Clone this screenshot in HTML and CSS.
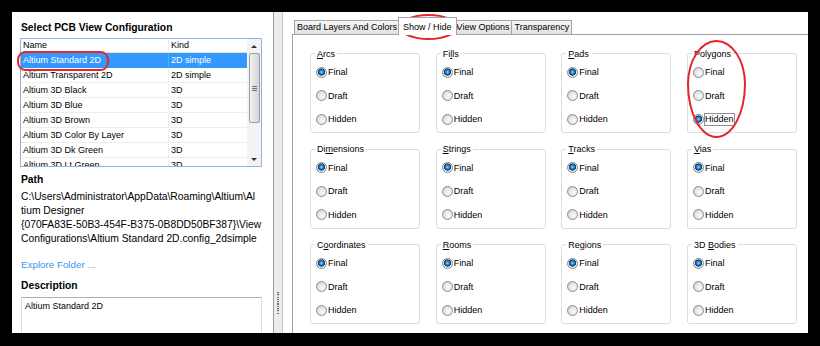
FILE: index.html
```html
<!DOCTYPE html>
<html lang="en">
<head>
<meta charset="utf-8">
<title>PCB View Configuration</title>
<link rel="stylesheet" href="styles.css">
</head>
<body>
<div class="window">
  <section class="left">
    <h2 class="h">Select PCB View Configuration</h2>
    <div class="list">
      <div class="list-body">
        <div class="row head"><span class="c1">Name</span><span class="c2">Kind</span></div>
        <div class="row sel"><span class="c1">Altium Standard 2D</span><span class="c2">2D simple</span></div>
        <div class="row"><span class="c1">Altium Transparent 2D</span><span class="c2">2D simple</span></div>
        <div class="row"><span class="c1">Altium 3D Black</span><span class="c2">3D</span></div>
        <div class="row"><span class="c1">Altium 3D Blue</span><span class="c2">3D</span></div>
        <div class="row"><span class="c1">Altium 3D Brown</span><span class="c2">3D</span></div>
        <div class="row"><span class="c1">Altium 3D Color By Layer</span><span class="c2">3D</span></div>
        <div class="row"><span class="c1">Altium 3D Dk Green</span><span class="c2">3D</span></div>
        <div class="row"><span class="c1">Altium 3D Lt Green</span><span class="c2">3D</span></div>
      </div>
      <div class="vscroll">
        <div class="sbtn"><i class="tri-up"></i></div>
        <div class="thumb"><i class="grip-lines"></i></div>
        <div class="strack"></div>
        <div class="sbtn"><i class="tri-down"></i></div>
      </div>
    </div>
    <h2 class="h path-h">Path</h2>
    <p class="path">C:\Users\Administrator\AppData\Roaming\Altium\Al<br>tium Designer<br>{070FA83E-50B3-454F-B375-0B8DD50BF387}\View<br>Configurations\Altium Standard 2D.config_2dsimple</p>
    <a class="link">Explore Folder ...</a>
    <h2 class="h desc-h">Description</h2>
    <div class="desc">Altium Standard 2D</div>
  </section>

  <div class="splitter"><div class="grip"></div></div>

  <section class="right">
    <div class="tabs">
      <div class="tab">Board Layers And Colors</div>
      <div class="tab active">Show / Hide</div>
      <div class="tab">View Options</div>
      <div class="tab">Transparency</div>
    </div>
    <div class="page">
      <div class="grid">
        <fieldset class="grp"><legend><u>A</u>rcs</legend>
          <div class="opt"><i class="rb on"></i><span>Final</span></div>
          <div class="opt"><i class="rb"></i><span>Draft</span></div>
          <div class="opt"><i class="rb"></i><span>Hidden</span></div>
        </fieldset>
        <fieldset class="grp"><legend>Fi<u>l</u>ls</legend>
          <div class="opt"><i class="rb on"></i><span>Final</span></div>
          <div class="opt"><i class="rb"></i><span>Draft</span></div>
          <div class="opt"><i class="rb"></i><span>Hidden</span></div>
        </fieldset>
        <fieldset class="grp"><legend><u>P</u>ads</legend>
          <div class="opt"><i class="rb on"></i><span>Final</span></div>
          <div class="opt"><i class="rb"></i><span>Draft</span></div>
          <div class="opt"><i class="rb"></i><span>Hidden</span></div>
        </fieldset>
        <fieldset class="grp"><legend>Poly<u>g</u>ons</legend>
          <div class="opt"><i class="rb"></i><span>Final</span></div>
          <div class="opt"><i class="rb"></i><span>Draft</span></div>
          <div class="opt"><i class="rb on"></i><span class="focus">Hidden</span></div>
        </fieldset>

        <fieldset class="grp"><legend>Di<u>m</u>ensions</legend>
          <div class="opt"><i class="rb on"></i><span>Final</span></div>
          <div class="opt"><i class="rb"></i><span>Draft</span></div>
          <div class="opt"><i class="rb"></i><span>Hidden</span></div>
        </fieldset>
        <fieldset class="grp"><legend><u>S</u>trings</legend>
          <div class="opt"><i class="rb on"></i><span>Final</span></div>
          <div class="opt"><i class="rb"></i><span>Draft</span></div>
          <div class="opt"><i class="rb"></i><span>Hidden</span></div>
        </fieldset>
        <fieldset class="grp"><legend><u>T</u>racks</legend>
          <div class="opt"><i class="rb on"></i><span>Final</span></div>
          <div class="opt"><i class="rb"></i><span>Draft</span></div>
          <div class="opt"><i class="rb"></i><span>Hidden</span></div>
        </fieldset>
        <fieldset class="grp"><legend><u>V</u>ias</legend>
          <div class="opt"><i class="rb on"></i><span>Final</span></div>
          <div class="opt"><i class="rb"></i><span>Draft</span></div>
          <div class="opt"><i class="rb"></i><span>Hidden</span></div>
        </fieldset>

        <fieldset class="grp"><legend>C<u>o</u>ordinates</legend>
          <div class="opt"><i class="rb on"></i><span>Final</span></div>
          <div class="opt"><i class="rb"></i><span>Draft</span></div>
          <div class="opt"><i class="rb"></i><span>Hidden</span></div>
        </fieldset>
        <fieldset class="grp"><legend><u>R</u>ooms</legend>
          <div class="opt"><i class="rb on"></i><span>Final</span></div>
          <div class="opt"><i class="rb"></i><span>Draft</span></div>
          <div class="opt"><i class="rb"></i><span>Hidden</span></div>
        </fieldset>
        <fieldset class="grp"><legend>Re<u>g</u>ions</legend>
          <div class="opt"><i class="rb on"></i><span>Final</span></div>
          <div class="opt"><i class="rb"></i><span>Draft</span></div>
          <div class="opt"><i class="rb"></i><span>Hidden</span></div>
        </fieldset>
        <fieldset class="grp"><legend>3D <u>B</u>odies</legend>
          <div class="opt"><i class="rb on"></i><span>Final</span></div>
          <div class="opt"><i class="rb"></i><span>Draft</span></div>
          <div class="opt"><i class="rb"></i><span>Hidden</span></div>
        </fieldset>
      </div>
    </div>
  </section>

  <div class="mark mark-row"></div>
  <div class="mark mark-tab"></div>
  <div class="mark mark-poly"></div>
</div>
</body>
</html>
```

FILE: styles.css
```css
* { box-sizing: border-box; }
html, body { margin: 0; padding: 0; }
body {
  background: #000;
  width: 820px;
  height: 346px;
  overflow: hidden;
  font-family: "Liberation Sans", Arial, sans-serif;
  font-size: 9px;
  color: #000;
}

.window {
  position: relative;
  margin: 12px 0 0 12px;
  width: 796px;
  height: 321px;
  background: #fff;
  display: flex;
  overflow: hidden;
}

/* ---------- left panel ---------- */
.left {
  width: 261px;
  flex: none;
  padding: 9px 11px 0 9px;
  display: flex;
  flex-direction: column;
  overflow: hidden;
}
.h {
  margin: 0;
  font-size: 10.3px;
  font-weight: bold;
  line-height: 14px;
  white-space: nowrap;
  flex: none;
}
.list {
  margin: 3px 0 0 -1px;
  height: 129px;
  flex: none;
  border: 1px solid #93b5dd;
  display: flex;
}
.list-body { flex: 1; overflow: hidden; }
.row {
  display: flex;
  height: 15px;
  padding-top: 1px;
  line-height: 13px;
  border-bottom: 1px solid #ededed;
  white-space: nowrap;
}
.row span { overflow: hidden; }
.row .c1 { width: 148px; flex: none; padding-left: 2px; border-right: 1px solid #ededed; }
.row .c2 { flex: 1; padding-left: 2px; }
.row.head { height: 14px; padding-top: 0; border-bottom-color: #e2e2e2; }
.row.sel { background: #3399ff; color: #fff; border-bottom-color: #3399ff; }
.row.sel .c1 { border-right-color: #5aa9fb; }

.vscroll {
  width: 14px;
  flex: none;
  background: #f3f3f3;
  display: flex;
  flex-direction: column;
}
.sbtn {
  height: 14px;
  flex: none;
  display: flex;
  align-items: center;
  justify-content: center;
}
.tri-up { width: 0; height: 0; border-left: 3px solid transparent; border-right: 3px solid transparent; border-bottom: 3px solid #333; }
.tri-down { width: 0; height: 0; border-left: 3px solid transparent; border-right: 3px solid transparent; border-top: 3px solid #333; }
.thumb {
  height: 70px;
  flex: none;
  margin: 0 1px 0 2px;
  border: 1px solid #9d9d9d;
  border-radius: 2px;
  background: linear-gradient(to right, #f4f4f4, #e2e2e2 50%, #d4d4d4);
  display: flex;
  align-items: center;
  justify-content: center;
}
.grip-lines {
  width: 5px;
  height: 5px;
  background: repeating-linear-gradient(to bottom, #6f6f6f 0 1px, transparent 1px 2px);
}
.strack { flex: 1; }

.path-h { margin-top: 6px; }
.path {
  margin: 3px 0 0;
  font-size: 10.3px;
  line-height: 13.9px;
  white-space: nowrap;
  flex: none;
}
.link {
  margin-top: 12.4px;
  font-size: 9.8px;
  line-height: 14px;
  color: #3d95ea;
  flex: none;
}
.desc-h { margin-top: 7.3px; }
.desc {
  margin-top: 3.7px;
  height: 60px;
  flex: none;
  border: 1px solid #dadde3;
  border-top-color: #abadb3;
  padding: 2px 3px;
  line-height: 12px;
}

/* ---------- splitter ---------- */
.splitter {
  width: 10px;
  flex: none;
  background: #ececec;
  border-left: 1px solid #9f9f9f;
  border-right: 1px solid #c5c5c5;
  display: flex;
  flex-direction: column;
  justify-content: flex-end;
  padding-bottom: 18px;
}
.grip {
  width: 2px;
  height: 23px;
  margin-left: 3px;
  background: repeating-linear-gradient(to bottom, #5b7591 0 1px, #c9d2dc 1px 1.5px, transparent 1.5px 2.3px);
}

/* ---------- right panel ---------- */
.right {
  flex: 1;
  padding: 5px 0 0 9px;
  display: flex;
  flex-direction: column;
  min-width: 0;
}
.tabs {
  height: 18px;
  flex: none;
  display: flex;
  align-items: flex-end;
  padding-left: 2px;
  border-bottom: 1px solid #a3a3a3;
}
.tab {
  height: 14px;
  border: 1px solid #a5a5a5;
  border-bottom: none;
  margin-left: -1px;
  padding: 0 2px;
  line-height: 13px;
  white-space: nowrap;
  background: linear-gradient(#f5f5f5, #ececec 50%, #e1e1e1);
}
.tab:first-child { margin-left: 0; }
.tab.active {
  position: relative;
  z-index: 1;
  height: 18px;
  margin: 0 -2px -1px -2px;
  padding: 2px 4px 0;
  line-height: 14px;
  background: #fff;
}

.page {
  flex: 1;
  border-left: 1px solid #a3a3a3;
  padding: 12.5px 0 0 17px;
}
.grid {
  display: grid;
  grid-template-columns: repeat(4, 110px);
  column-gap: 15.67px;
  row-gap: 10px;
}
.grp {
  margin: 0;
  min-width: 0;
  border: 1px solid #d5dfe5;
  border-radius: 3px;
  padding: 1px 0 1px 5px;
}
.grp legend {
  margin-left: -1px;
  padding: 0 2px;
  line-height: 12px;
  font-size: 9px;
}
.opt {
  display: flex;
  align-items: center;
  height: 23.5px;
  white-space: nowrap;
}
.rb {
  width: 11px;
  height: 11px;
  flex: none;
  margin-right: 1px;
  border-radius: 50%;
  border: 1px solid #8c8c8c;
  background: radial-gradient(circle at 62% 62%, #fbfbfb 0%, #e8e8e8 45%, #c6c6c6 100%);
}
.rb.on {
  border-color: #7f8a96;
  background:
    radial-gradient(circle at 50% 45%, #9fdcff 0, #3a99e3 1.3px, #175a9e 2.6px, #0d3a6d 3.3px, rgba(13,58,109,0) 3.9px),
    radial-gradient(circle at 62% 62%, #fbfbfb 0%, #e8e8e8 45%, #c6c6c6 100%);
}
.focus {
  margin-left: -1px;
  border: 1px solid #8f8f8f;
  line-height: 11px;
}

/* ---------- red annotation marks ---------- */
.mark {
  position: absolute;
  border: 2px solid #e5252b;
  pointer-events: none;
}
.mark-row { left: 5px; top: 39px; width: 92px; height: 20px; border-radius: 8px / 9px; }
.mark-tab { left: 387px; top: 2px; width: 59px; height: 26px; border-radius: 50%; }
.mark-poly { left: 675px; top: 28px; width: 59px; height: 98px; border-radius: 50% 50% 50% 50% / 45% 45% 55% 55%; }
```
